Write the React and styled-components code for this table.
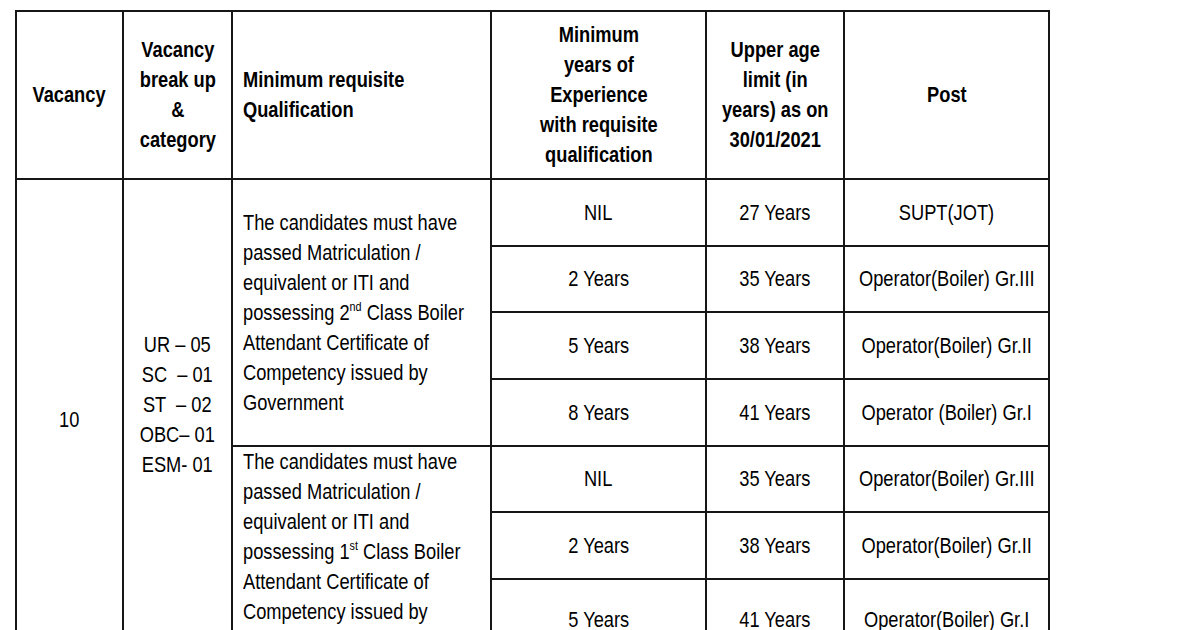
import React from "react";
import styled, { createGlobalStyle } from "styled-components";

const GlobalStyle = createGlobalStyle`
  html, body {
    margin: 0;
    padding: 0;
    background: #fff;
  }
  body {
    width: 1200px;
    height: 630px;
    overflow: hidden;
    font-family: "Liberation Sans", Arial, sans-serif;
    color: #000;
  }
`;

const Page = styled.div`
  padding: 10px 0 0 15px;
`;

const Table = styled.table`
  border-collapse: collapse;
  table-layout: fixed;
  width: 1033px;
  font-size: 22px;
  line-height: 30px;

  td, th {
    border: 2px solid #161616;
    padding: 0 10px;
    vertical-align: middle;
  }
`;

const HeadRow = styled.tr`
  height: 168px;
`;

const Head = styled.th`
  font-weight: bold;
  text-align: ${(p) => (p.$left ? "left" : "center")};
`;

const Row = styled.tr`
  height: ${(p) => p.$h}px;
`;

const Cell = styled.td`
  text-align: center;
`;

const QualCell = styled.td`
  text-align: left;
  && {
    vertical-align: ${(p) => (p.$top ? "top" : "middle")};
  }
`;

/* the source uses Arial Narrow: Arial squeezed sideways is the closest match */
const Center = styled.div`
  display: flex;
  justify-content: ${(p) => (p.$left ? "flex-start" : "center")};
`;

const Narrow = styled.span`
  display: inline-block;
  white-space: pre;
  text-align: ${(p) => (p.$left ? "left" : "center")};
  transform: scaleX(0.83);
  transform-origin: ${(p) => (p.$left ? "left center" : "center center")};
`;

const Sup = styled.sup`
  font-size: 13px;
  line-height: 0;
  vertical-align: 9px;
`;

const rows = [
  { exp: "NIL", age: "27 Years", post: "SUPT(JOT)", h: 67 },
  { exp: "2 Years", age: "35 Years", post: "Operator(Boiler) Gr.III", h: 66 },
  { exp: "5 Years", age: "38 Years", post: "Operator(Boiler) Gr.II", h: 67 },
  { exp: "8 Years", age: "41 Years", post: "Operator (Boiler) Gr.I", h: 67 },
  { exp: "NIL", age: "35 Years", post: "Operator(Boiler) Gr.III", h: 66 },
  { exp: "2 Years", age: "38 Years", post: "Operator(Boiler) Gr.II", h: 67 },
  { exp: "5 Years", age: "41 Years", post: "Operator(Boiler) Gr.I", h: 82 },
];

const Text = ({ children, left }) => (
  <Center $left={left}>
    <Narrow $left={left}>{children}</Narrow>
  </Center>
);

const Qualification = ({ grade, suffix }) => (
  <Text left>
    {"The candidates must have\npassed Matriculation /\nequivalent or ITI and\npossessing "}
    {grade}
    <Sup>{suffix}</Sup>
    {" Class Boiler\nAttendant Certificate of\nCompetency issued by\nGovernment"}
  </Text>
);

export default function App() {
  return (
    <>
      <GlobalStyle />
      <Page>
        <Table>
          <colgroup>
            <col style={{ width: 107 }} />
            <col style={{ width: 109 }} />
            <col style={{ width: 259 }} />
            <col style={{ width: 215 }} />
            <col style={{ width: 138 }} />
            <col style={{ width: 205 }} />
          </colgroup>
          <thead>
            <HeadRow>
              <Head>
                <Text>Vacancy</Text>
              </Head>
              <Head>
                <Text>{"Vacancy\nbreak up\n&\ncategory"}</Text>
              </Head>
              <Head $left>
                <Text left>{"Minimum requisite\nQualification"}</Text>
              </Head>
              <Head>
                <Text>
                  {"Minimum\nyears of\nExperience\nwith requisite\nqualification"}
                </Text>
              </Head>
              <Head>
                <Text>{"Upper age\nlimit (in\nyears) as on\n30/01/2021"}</Text>
              </Head>
              <Head>
                <Text>Post</Text>
              </Head>
            </HeadRow>
          </thead>
          <tbody>
            {rows.map((r, i) => (
              <Row key={i} $h={r.h}>
                {i === 0 && (
                  <>
                    <Cell rowSpan={7}>
                      <Text>10</Text>
                    </Cell>
                    <Cell rowSpan={7}>
                      <Text>{"UR – 05\nSC  – 01\nST  – 02\nOBC– 01\nESM- 01\n "}</Text>
                    </Cell>
                    <QualCell rowSpan={4}>
                      <Qualification grade="2" suffix="nd" />
                    </QualCell>
                  </>
                )}
                {i === 4 && (
                  <QualCell rowSpan={3} $top>
                    <Qualification grade="1" suffix="st" />
                  </QualCell>
                )}
                <Cell>
                  <Text>{r.exp}</Text>
                </Cell>
                <Cell>
                  <Text>{r.age}</Text>
                </Cell>
                <Cell>
                  <Text>{r.post}</Text>
                </Cell>
              </Row>
            ))}
          </tbody>
        </Table>
      </Page>
    </>
  );
}
